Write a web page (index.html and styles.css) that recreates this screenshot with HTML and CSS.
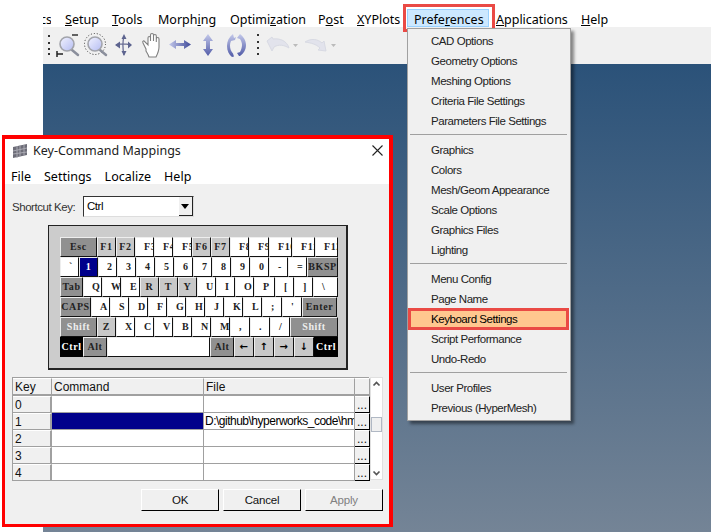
FILE: index.html
```html
<!DOCTYPE html>
<html lang="en">
<head>
    <meta charset="UTF-8">
    <meta name="viewport" content="width=device-width, initial-scale=1.0">
    <link rel="stylesheet" href="styles.css">
    <title>Key-Command Mappings</title>
</head>
<body>

    <div class="app">
        <nav class="menubar">
            <span class="cut"><span>cs</span></span>
            <span class="m-setup"><u>S</u>etup</span>
            <span class="m-tools"><u>T</u>ools</span>
            <span class="m-morph">Morph<u>i</u>ng</span>
            <span class="m-opt">Optimi<u>z</u>ation</span>
            <span class="m-post">P<u>o</u>st</span>
            <span class="m-xy"><u>X</u>YPlots</span>
            <span class="m-pref">Prefe<u>r</u>ences</span>
            <span class="m-apps"><u>A</u>pplications</span>
            <span class="m-help"><u>H</u>elp</span>
        </nav>

        <div class="toolbar">
            <svg width="320" height="37" viewBox="0 0 320 37">
                <defs>
                    <linearGradient id="lens" x1="0" y1="0" x2="1" y2="1">
                        <stop offset="0" stop-color="#f2f3ff"/>
                        <stop offset="1" stop-color="#b4bcf2"/>
                    </linearGradient>
                    <linearGradient id="arrow" x1="0" y1="0" x2="0" y2="1">
                        <stop offset="0" stop-color="#c3c8ea"/>
                        <stop offset="1" stop-color="#525ca8"/>
                    </linearGradient>
                    <linearGradient id="arrowh" x1="0" y1="0" x2="1" y2="0">
                        <stop offset="0" stop-color="#c3c8ea"/>
                        <stop offset="1" stop-color="#3f4a9a"/>
                    </linearGradient>
                </defs>
                <!-- grips -->
                <g fill="#333">
                    <rect x="5" y="8" width="2" height="2"/><rect x="5" y="15" width="2" height="2"/><rect x="5" y="21" width="2" height="2"/><rect x="5" y="26" width="2" height="2"/>
                    <rect x="214" y="7" width="2" height="2"/><rect x="214" y="14" width="2" height="2"/><rect x="214" y="20" width="2" height="2"/><rect x="214" y="26" width="2" height="2"/>
                </g>
                <!-- zoom box -->
                <path d="M29 23l6 5" stroke="#8b8f9c" stroke-width="2.500" stroke-linecap="round"/>
                <circle cx="24" cy="17" r="7" fill="url(#lens)" stroke="#a2a4ab" stroke-width="1.600"/>
                <path d="M14 24v6M14 27h6" stroke="#222" stroke-width="1.500" fill="none"/>
                <path d="M29 8h6" stroke="#333" stroke-width="1.500"/>
                <!-- zoom fit -->
                <circle cx="52" cy="17" r="10.500" fill="none" stroke="#333" stroke-dasharray="1 2"/>
                <path d="M57 23l6 5" stroke="#8b8f9c" stroke-width="2.500" stroke-linecap="round"/>
                <circle cx="52" cy="17" r="7" fill="url(#lens)" stroke="#a2a4ab" stroke-width="1.600"/>
                <!-- pan cross -->
                <path d="M73 18c4-1.500 9-1.500 15 0M81 9c-1.500 6-1.500 12 0 19" stroke="#6a6e94" stroke-width="1.300" fill="none"/>
                <path d="M72 18l5-3.500v7zM89 18l-4-3.500v7zM81 7l-2.500 5h5zM81 29l-2.500-5h5z" fill="#5d648f"/>
                <!-- hand -->
                <path d="M103 22l-3-6c-1-2 1-3 2-1l3 3V11c0-2 2.500-2 2.500 0v3-6c0-2 3-2 3 0v6-5c0-2 2.800-2 2.800 0v6-3c0-2 2.700-2 2.700 0v8c0 4-1.500 7-3 10h-7c-1-3-2-4-3-6z" fill="#fff" stroke="#808080" stroke-width="1.100"/>
                <!-- horizontal -->
                <path d="M126 17.500l7-4.500v3h8v-3l7 4.500-7 4.500v-3h-8v3z" fill="url(#arrowh)"/>
                <!-- vertical -->
                <path d="M165 7l5 7h-3v8h3l-5 7-5-7h3v-8h-3z" fill="url(#arrow)"/>
                <!-- rotate -->
                <path d="M190 7l1 4 2-1-1 3-4 1c-.7 1.500-1 3-1 4.500 0 3 1 6 3 8l1 3-2 .5c-3-2.500-5-6-5-11s2-9 6-12z" fill="url(#arrow)"/>
                <path d="M197 7c3 2.500 6 6 6 11s-2.500 8.500-6 11l-1 0-2-3 3-1c1-2 2-4.500 2-7s-1-4.500-2-6l-3-1z" fill="url(#arrow)"/>
                <!-- undo redo, disabled -->
                <path d="M224 14l5 10 2-4c5-3 10-2 15 1-2-7-9-10-16-9l-1-2z" fill="#e2e3ec" stroke="#d8dae3"/>
                <path d="M262 15c6-4 13-3 17 1l2-2 2 10-8-1 2-2c-4-4-9-5-15-6z" fill="#e2e3ec" stroke="#d8dae3"/>
                <path d="M250 17h5l-2.500 3zM288 17h5l-2.500 3z" fill="#bbb"/>
            </svg>
        </div>
        <div class="canvas"></div>
    </div>

    <div class="mark-pref"><span></span></div>

    <div class="popup">
        <div class="popup-item">CAD Options</div>
        <div class="popup-item">Geometry Options</div>
        <div class="popup-item">Meshing Options</div>
        <div class="popup-item">Criteria File Settings</div>
        <div class="popup-item">Parameters File Settings</div>
        <hr>
        <div class="popup-item">Graphics</div>
        <div class="popup-item">Colors</div>
        <div class="popup-item">Mesh/Geom Appearance</div>
        <div class="popup-item">Scale Options</div>
        <div class="popup-item">Graphics Files</div>
        <div class="popup-item">Lighting</div>
        <hr>
        <div class="popup-item">Menu Config</div>
        <div class="popup-item">Page Name</div>
        <div class="popup-item selected">Keyboard Settings</div>
        <div class="popup-item">Script Performance</div>
        <div class="popup-item">Undo-Redo</div>
        <hr>
        <div class="popup-item">User Profiles</div>
        <div class="popup-item">Previous (HyperMesh)</div>
    </div>

    <div class="dialog">
        <div class="titlebar">
            <svg class="title-icon" width="17" height="16" viewBox="0 0 17 16">
                <path d="M1 4l14-3v11L1 15z" fill="#6d6d78"/>
                <path d="M1 8l14-3M1 11l14-2M5 3v12M8 2.500v11M12 2v10" stroke="#a9a9b2" fill="none"/>
            </svg>
            <span class="title-text">Key-Command Mappings</span>
            <svg class="close" width="11" height="11" viewBox="0 0 11 11">
                <path d="M0.500 0.500l10 10M10.500 0.500l-10 10" stroke="#222" stroke-width="1.100"/>
            </svg>
        </div>
        <div class="dialog-menu">
            <span>File</span><span>Settings</span><span>Localize</span><span>Help</span>
        </div>

        <div class="dialog-body">
            <div class="shortcut">
                <label for="shortcutKey">Shortcut Key:</label>
                <div class="combo" id="shortcutKey">
                    <span class="combo-value">Ctrl</span>
                    <span class="combo-arrow"></span>
                </div>
            </div>

            <div class="keyboard">
                <div class="key-row">
                    <div class="key dark k37">Esc</div><div class="key gray">F1</div><div class="key gray">F2</div><div class="key">F3</div><div class="key">F4</div><div class="key">F5</div><div class="key gray">F6</div><div class="key gray">F7</div><div class="key">F8</div><div class="key k20">F9</div><div class="key k23">F10</div><div class="key k23">F11</div><div class="key k23">F12</div>
                </div>
                <div class="key-row">
                    <div class="key">`</div><div class="key active">1</div><div class="key">2</div><div class="key">3</div><div class="key">4</div><div class="key">5</div><div class="key">6</div><div class="key">7</div><div class="key">8</div><div class="key">9</div><div class="key">0</div><div class="key">-</div><div class="key">=</div><div class="key dark k31">BKSP</div>
                </div>
                <div class="key-row">
                    <div class="key dark k23">Tab</div><div class="key">Q</div><div class="key">W</div><div class="key">E</div><div class="key gray">R</div><div class="key gray">T</div><div class="key gray">Y</div><div class="key">U</div><div class="key">I</div><div class="key">O</div><div class="key k21">P</div><div class="key">[</div><div class="key">]</div><div class="key k25">\</div>
                </div>
                <div class="key-row">
                    <div class="key dark k31">CAPS</div><div class="key">A</div><div class="key">S</div><div class="key">D</div><div class="key">F</div><div class="key">G</div><div class="key">H</div><div class="key">J</div><div class="key">K</div><div class="key">L</div><div class="key k20">;</div><div class="key k20">'</div><div class="key dark k35">Enter</div>
                </div>
                <div class="key-row">
                    <div class="key dark light-text k37">Shift</div><div class="key gray">Z</div><div class="key">X</div><div class="key">C</div><div class="key">V</div><div class="key">B</div><div class="key">N</div><div class="key">M</div><div class="key k20">,</div><div class="key k20">.</div><div class="key k20">/</div><div class="key dark light-text k48">Shift</div>
                </div>
                <div class="key-row">
                    <div class="key black k23">Ctrl</div><div class="key dark k24">Alt</div><div class="key k103"></div><div class="key dark k24">Alt</div><div class="key gray arrow k20">←</div><div class="key gray arrow k20">↑</div><div class="key gray arrow k20">→</div><div class="key gray arrow k20">↓</div><div class="key black k24">Ctrl</div>
                </div>
            </div>

            <div class="mapping">
                <div class="table">
                    <div class="th">Key</div><div class="th">Command</div><div class="th">File</div><div class="th"></div>
                    <div class="row-head">0</div><div class="td"></div><div class="td"></div><div class="more">...</div>
                    <div class="row-head">1</div><div class="td navy"></div><div class="td">D:\github\hyperworks_code\hm</div><div class="more">...</div>
                    <div class="row-head">2</div><div class="td"></div><div class="td"></div><div class="more">...</div>
                    <div class="row-head">3</div><div class="td"></div><div class="td"></div><div class="more">...</div>
                    <div class="row-head">4</div><div class="td"></div><div class="td"></div><div class="more">...</div>
                </div>
                <div class="scrollbar">
                    <svg width="11" height="14" viewBox="0 0 11 14"><path d="M2.500 7.500l3-3 3 3" fill="none" stroke="#555" stroke-width="1.700"/></svg>
                    <div class="thumb"></div>
                    <svg width="11" height="14" viewBox="0 0 11 14"><path d="M2.500 6.500l3 3 3-3" fill="none" stroke="#555" stroke-width="1.700"/></svg>
                </div>
            </div>

            <div class="buttons">
                <button type="button">OK</button>
                <button type="button">Cancel</button>
                <button type="button" disabled>Apply</button>
            </div>
        </div>
    </div>

</body>
</html>
```

FILE: styles.css
```css
body {
    margin: 0;
    width: 711px;
    height: 532px;
    overflow: hidden;
    background-color: #fff;
    font-family: "Liberation Sans", Arial, sans-serif;
    font-size: 11.5px;
    letter-spacing: -0.45px;
    color: #111;
}

.app {
    display: flex;
    flex-direction: column;
    height: 532px;
    padding-left: 43px;
    box-sizing: border-box;
}

/* main menu */
.menubar {
    display: flex;
    height: 27px;
    padding-top: 12px;
    box-sizing: border-box;
    font-family: "Noto Sans", sans-serif;
    font-size: 12.5px;
    letter-spacing: normal;
    line-height: 15px;
    white-space: nowrap;
    color: #000;
}

.menubar span {
    display: block;
}

.cut {
    width: 8px;
    overflow: hidden;
}

.cut span {
    margin-left: -3px;
}

.m-setup { margin-left: 14px; width: 47px; }
.m-tools { width: 46px; }
.m-morph { width: 72px; }
.m-opt { width: 88px; }
.m-post { width: 39px; }
.m-xy { width: 57px; }
.m-pref { width: 82px; }
.m-apps { width: 85px; }

.toolbar {
    height: 37px;
    background-color: #f0f0f0;
}

.canvas {
    flex: 1;
    background: linear-gradient(#2b5279, #748496);
}

/* red box and hover state on the Preferences entry */
.mark-pref {
    position: absolute;
    left: 403px;
    top: 4px;
    width: 92px;
    height: 28px;
    box-sizing: border-box;
    border: 3px solid #ea4a45;
}

.mark-pref span {
    display: block;
    position: absolute;
    left: 1px;
    top: 2px;
    width: 82px;
    height: 18px;
    box-sizing: border-box;
    border: 1px solid #99d1ff;
    background-color: #cce8ff;
    z-index: -1;
}

/* dropdown */
.popup {
    position: absolute;
    left: 407px;
    top: 28px;
    width: 164px;
    height: 393px;
    box-sizing: border-box;
    padding-top: 2px;
    border: 1px solid #a0a0a0;
    background-color: #f0f0f0;
    box-shadow: 3px 3px 3px rgba(0, 0, 0, 0.45);
    color: #222;
}

.popup-item {
    height: 20px;
    line-height: 20px;
    padding-left: 23px;
    white-space: nowrap;
}

.popup hr {
    height: 0;
    margin: 3px 3px 5px 2px;
    padding: 0;
    border: none;
    border-top: 1px solid #a0a0a0;
}

.popup-item.selected {
    box-sizing: border-box;
    height: 22px;
    line-height: 16px;
    margin: -1px 1px -1px 0;
    padding-left: 20px;
    border: 3px solid #ea4a45;
    background-color: #ffc78f;
    color: #000;
}

/* dialog */
.dialog {
    position: absolute;
    left: 2px;
    top: 135px;
    width: 391px;
    height: 392px;
    box-sizing: border-box;
    border: 3px solid #f00;
    border-top-width: 4px;
    border-right-width: 4px;
    background-color: #f0f0f0;
}

.titlebar {
    display: flex;
    align-items: center;
    height: 23px;
    padding: 0 6px 3px 7px;
    background-color: #fff;
}

.title-text {
    margin-left: 4px;
    font-family: "Noto Sans", sans-serif;
    font-size: 12.5px;
    letter-spacing: normal;
    color: #222;
}

.close {
    margin-left: auto;
}

.dialog-menu {
    display: flex;
    gap: 13px;
    height: 19px;
    padding-left: 6px;
    background-color: #fff;
    font-family: "Noto Sans", sans-serif;
    font-size: 12.5px;
    letter-spacing: normal;
    line-height: 23px;
    color: #000;
}

.dialog-body {
    padding: 12px 7px 0 7px;
}

.shortcut {
    display: flex;
    align-items: center;
    height: 21px;
}

.shortcut label {
    width: 71px;
    white-space: nowrap;
    color: #333;
}

.combo {
    display: flex;
    width: 111px;
    height: 21px;
    box-sizing: border-box;
    border: 1px solid #333;
    border-right-color: #ddd;
    border-bottom-color: #ddd;
    background-color: #fff;
}

.combo-value {
    flex: 1;
    padding-left: 3px;
    line-height: 19px;
    color: #000;
}

.combo-arrow {
    position: relative;
    width: 13px;
    background-color: #f0f0f0;
    border-right: 1px solid #222;
    border-bottom: 1px solid #222;
}

.combo-arrow::after {
    content: "";
    position: absolute;
    left: 2px;
    top: 7px;
    border: 4px solid transparent;
    border-top: 5px solid #000;
}

/* keyboard */
.keyboard {
    width: 300px;
    height: 145px;
    box-sizing: border-box;
    margin: 8px 0 0 36px;
    padding: 11px 0 0 11px;
    border: 1px solid #222;
    border-right-width: 2px;
    border-bottom-width: 2px;
    background-color: #ccc;
}

.key-row {
    display: flex;
}

.key {
    flex: 0 0 19px;
    width: 19px;
    height: 20px;
    box-sizing: border-box;
    overflow: hidden;
    padding-left: 8px;
    border: 1px solid #eee;
    border-right-color: #111;
    border-bottom-color: #111;
    background-color: #fff;
    font-family: "Liberation Serif", serif;
    font-size: 10px;
    font-weight: bold;
    letter-spacing: 0.6px;
    line-height: 18px;
    white-space: nowrap;
    color: #222;
}

.key.gray,
.key.dark,
.key.active,
.key.black {
    padding-left: 0;
    text-align: center;
}

.key.gray { background-color: #c8c8c8; }
.key.dark { background-color: #909090; }
.key.active { background-color: #00008b; color: #fff; }
.key.black { background-color: #000; border-color: #000; color: #fff; }
.key.light-text { color: #eee; }
.key.arrow { font-family: "DejaVu Sans", sans-serif; color: #000; }

.k20 { flex-basis: 20px; }
.k21 { flex-basis: 21px; }
.k23 { flex-basis: 23px; }
.k24 { flex-basis: 24px; }
.k25 { flex-basis: 25px; }
.k31 { flex-basis: 31px; }
.k35 { flex-basis: 35px; }
.k37 { flex-basis: 37px; }
.k48 { flex-basis: 48px; }
.k103 { flex-basis: 103px; }

/* mapping table */
.mapping {
    display: flex;
    gap: 1px;
    margin-top: 7px;
}

.table {
    display: grid;
    grid-template-columns: 39px 152px 151px 15px;
    grid-template-rows: 18px repeat(5, 17px);
    width: 357px;
    border-top: 1px solid #a0a0a0;
    border-left: 1px solid #a0a0a0;
    box-sizing: border-box;
    height: 104px;
    font-size: 12px;
    letter-spacing: normal;
    line-height: 16px;
    color: #111;
}

.th,
.row-head {
    box-sizing: border-box;
    padding-left: 2px;
    border-right: 1px solid #a0a0a0;
    border-bottom: 1px solid #a0a0a0;
    background-color: #f0f0f0;
    border-top: 1px solid #fff;
}

.th {
    border-bottom-width: 2px;
}

.row-head {
    border-right-width: 2px;
}

.td {
    box-sizing: border-box;
    overflow: hidden;
    padding-left: 1px;
    border-right: 1px solid #a0a0a0;
    border-bottom: 1px solid #a0a0a0;
    background-color: #fff;
    letter-spacing: -0.5px;
    white-space: nowrap;
    color: #000;
}

.td.navy {
    background-color: #00008b;
}

.more {
    box-sizing: border-box;
    border-top: 1px solid #fff;
    border-right: 1px solid #000;
    border-bottom: 1px solid #000;
    background-color: #f0f0f0;
    text-align: center;
    line-height: 16px;
}

.scrollbar {
    display: flex;
    flex-direction: column;
    justify-content: space-between;
    align-items: center;
    position: relative;
    width: 13px;
    height: 103px;
    box-sizing: border-box;
    background-color: #fff;
    border: 1px solid #e0e0e0;
}

.thumb {
    position: absolute;
    left: 0;
    top: 39px;
    width: 11px;
    height: 15px;
    border: 1px solid #b0b8c4;
    box-sizing: border-box;
    background-color: #f0f0f0;
}

.buttons {
    display: flex;
    justify-content: flex-end;
    gap: 4px;
    margin-top: 8px;
    margin-right: -1px;
}

button {
    width: 78px;
    height: 22px;
    padding: 0;
    border: 1px solid #fff;
    border-right: 1px solid #000;
    border-bottom: 1px solid #000;
    background-color: #f0f0f0;
    font-family: "Liberation Sans", Arial, sans-serif;
    font-size: 11.5px;
    letter-spacing: -0.2px;
    color: #111;
}

button:disabled {
    color: #808080;
}
```
